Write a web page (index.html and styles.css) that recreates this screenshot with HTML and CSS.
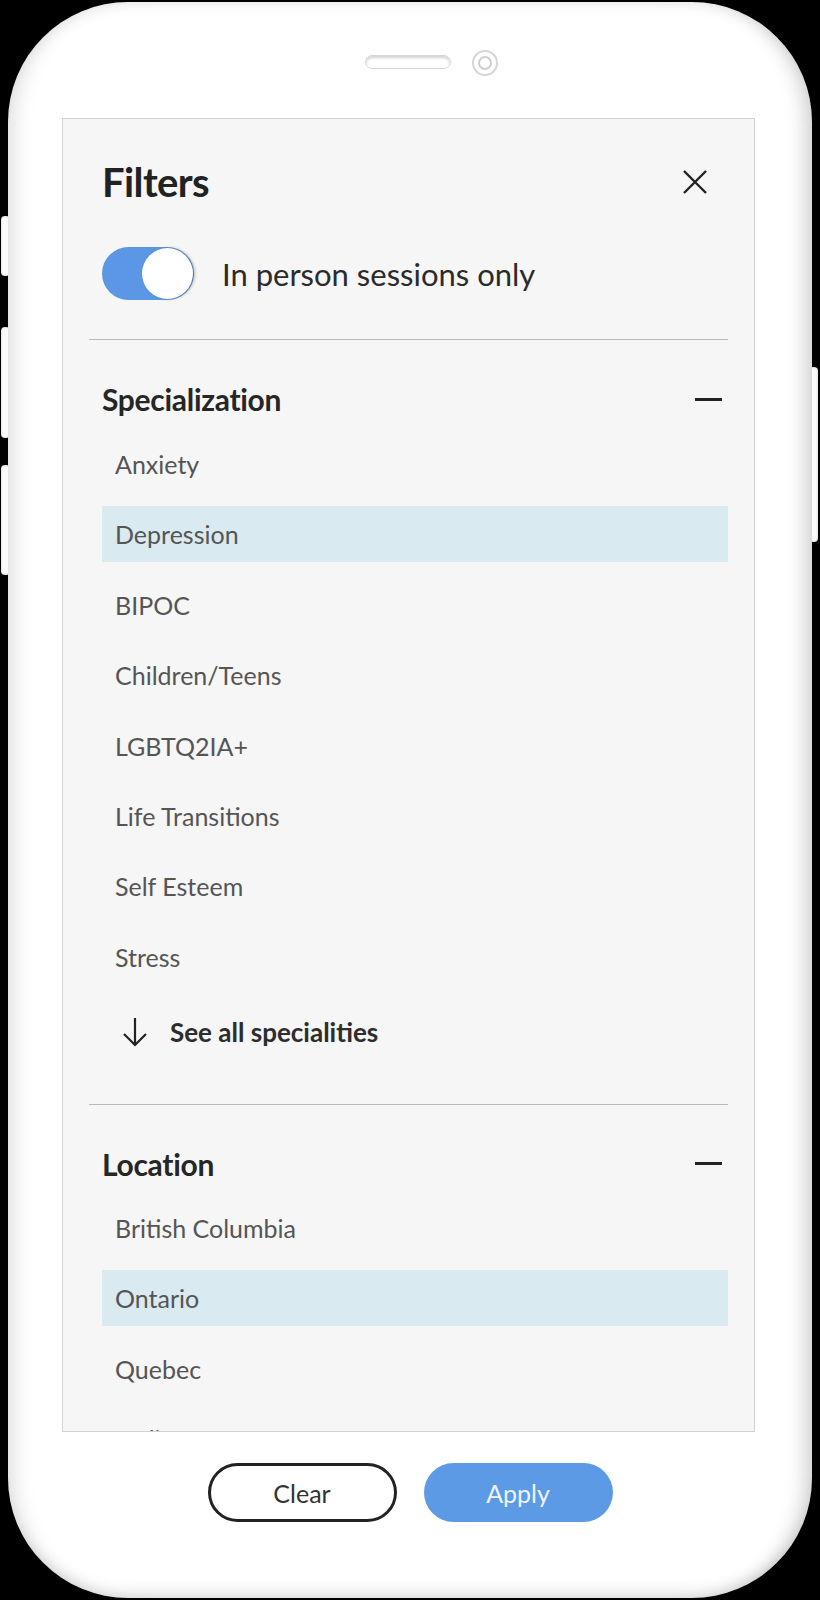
FILE: index.html
```html
<!DOCTYPE html>
<html lang="en">
<head>
    <meta charset="UTF-8">
    <meta name="viewport" content="width=device-width, initial-scale=1.0">
    <title>Filters</title>

    <link rel="stylesheet" href="styles.css">
</head>
<body>
    <div class="device">
        <span class="side-btn side-btn-1"></span>
        <span class="side-btn side-btn-2"></span>
        <span class="side-btn side-btn-3"></span>
        <span class="side-btn side-btn-r"></span>

        <div class="phone">
            <div class="phone-top">
                <span class="speaker"></span>
                <span class="camera"><span class="lens"></span></span>
            </div>

            <div class="screen">
                <div class="head">
                    <h1>Filters</h1>
                    <svg class="close" width="26" height="24" viewBox="0 0 26 24">
                        <path d="M2 1 L24 23 M24 1 L2 23" stroke="#222" stroke-width="2.4" fill="none"/>
                    </svg>
                </div>

                <div class="toggle-row">
                    <span class="toggle"><span class="knob"></span></span>
                    <span>In person sessions only</span>
                </div>

                <hr class="sep">

                <div class="section-head">
                    <h2>Specialization</h2>
                    <span class="minus"></span>
                </div>
                <ul class="options">
                    <li>Anxiety</li>
                    <li class="selected">Depression</li>
                    <li>BIPOC</li>
                    <li>Children/Teens</li>
                    <li>LGBTQ2IA+</li>
                    <li>Life Transitions</li>
                    <li>Self Esteem</li>
                    <li>Stress</li>
                </ul>
                <div class="see-all">
                    <svg width="26" height="30" viewBox="0 0 26 30">
                        <path d="M13 1 V28 M2 17 L13 28 L24 17" stroke="#222" stroke-width="2.2" fill="none"/>
                    </svg>
                    <span>See all specialities</span>
                </div>

                <hr class="sep sep-2">

                <div class="section-head">
                    <h2>Location</h2>
                    <span class="minus"></span>
                </div>
                <ul class="options options-loc">
                    <li>British Columbia</li>
                    <li class="selected">Ontario</li>
                    <li>Quebec</li>
                    <li>Online</li>
                </ul>
            </div>

            <div class="actions">
                <button class="btn btn-clear" type="button">Clear</button>
                <button class="btn btn-apply" type="button">Apply</button>
            </div>
        </div>
    </div>
</body>
</html>
```

FILE: styles.css
```css
*{
    margin: 0;
    padding: 0;
    box-sizing: border-box;
    font-family: Lato, 'Liberation Sans', sans-serif;
}

body{
    width: 820px;
    height: 1600px;
    background: #000;
    overflow: hidden;
}

.device{
    position: relative;
    width: 804px;
    height: 1596px;
    margin: 2px 0 0 8px;
}

/* buttons on the frame edge */
.side-btn{
    position: absolute;
    width: 9px;
    background: #fafafa;
    border-radius: 4px;
    box-shadow: inset 0 0 2px rgba(0,0,0,0.25);
}
.side-btn-1{ left: -7px; top: 214px; height: 60px; }
.side-btn-2{ left: -7px; top: 325px; height: 111px; }
.side-btn-3{ left: -7px; top: 463px; height: 110px; }
.side-btn-r{ right: -6px; top: 365px; height: 175px; }

.phone{
    position: relative;
    width: 100%;
    height: 100%;
    background: #fff;
    border-radius: 120px;
    box-shadow:
        inset 20px 0 20px -14px rgba(0,0,0,0.13),
        inset -20px 0 20px -14px rgba(0,0,0,0.2),
        inset 0 14px 16px -12px rgba(0,0,0,0.08),
        inset 0 -16px 16px -12px rgba(0,0,0,0.14);
    display: flex;
    flex-direction: column;
}

.phone-top{
    height: 116px;
    padding-top: 53px;
    padding-left: 43px;
    display: flex;
    justify-content: center;
    align-items: flex-start;
    gap: 21px;
}
.speaker{
    width: 86px;
    height: 14px;
    border-radius: 7px;
    background: #fff;
    border: 1px solid #d8d8d8;
    box-shadow: inset 0 2px 3px rgba(0,0,0,0.18);
}
.camera{
    width: 26px;
    height: 26px;
    margin-top: -5px;
    border-radius: 50%;
    border: 2px solid #d6d6d6;
    display: flex;
    align-items: center;
    justify-content: center;
}
.camera .lens{
    width: 14px;
    height: 14px;
    border-radius: 50%;
    border: 2px solid #cfcfcf;
}

.screen{
    height: 1314px;
    margin: 0 57px 0 54px;
    background: #f6f6f6;
    border: 1px solid #d2d2d2;
    padding: 0 26px;
    overflow: hidden;
}

.head{
    height: 50px;
    margin-top: 38px;
    padding: 0 20px 0 13px;
    display: flex;
    align-items: center;
    justify-content: space-between;
}
.head h1{
    font-size: 40px;
    font-weight: 700;
    color: #222;
    letter-spacing: -0.6px;
}

.toggle-row{
    margin-top: 40px;
    padding-left: 13px;
    display: flex;
    align-items: center;
    gap: 28px;
    font-size: 31px;
    color: #2b2b2b;
}
.toggle{
    width: 92px;
    height: 53px;
    border-radius: 27px;
    background: #5b97e4;
    display: flex;
    justify-content: flex-end;
    align-items: center;
    padding-right: 1px;
}
.toggle .knob{
    width: 51px;
    height: 51px;
    border-radius: 50%;
    background: #fff;
    box-shadow: 2px 0 3px rgba(0,0,0,0.25);
}

.sep{
    border: none;
    border-top: 1.5px solid #b9b9b9;
    margin-top: 39px;
}
.sep-2{
    margin-top: 52px;
}

.section-head{
    height: 40px;
    margin-top: 39px;
    padding: 0 6px 0 13px;
    display: flex;
    align-items: center;
    justify-content: space-between;
}
.section-head h2{
    font-size: 30px;
    font-weight: 700;
    color: #262626;
    letter-spacing: -0.3px;
}
.minus{
    width: 27px;
    height: 3px;
    background: #222;
}

.options{
    list-style: none;
    margin: 17px 0 0 13px;
    display: flex;
    flex-direction: column;
    gap: 14.4px;
}
.options-loc{
    margin-top: 16px;
}
.options li{
    height: 56px;
    padding-left: 13px;
    display: flex;
    align-items: center;
    font-size: 25px;
    color: #555;
}
.options li.selected{
    background: #daeaf1;
}

.see-all{
    height: 40px;
    margin-top: 27px;
    padding-left: 33px;
    display: flex;
    align-items: center;
    gap: 22px;
    font-size: 26px;
    font-weight: 700;
    color: #2d2d2d;
}

.actions{
    margin-top: 31px;
    display: flex;
    justify-content: center;
    gap: 27px;
}
.btn{
    width: 189px;
    height: 59px;
    border-radius: 30px;
    font-size: 25px;
    cursor: pointer;
}
.btn-clear{
    background: #fff;
    border: 3px solid #222;
    color: #333;
}
.btn-apply{
    background: #5c9ae6;
    border: none;
    color: #eef4fc;
}
```
